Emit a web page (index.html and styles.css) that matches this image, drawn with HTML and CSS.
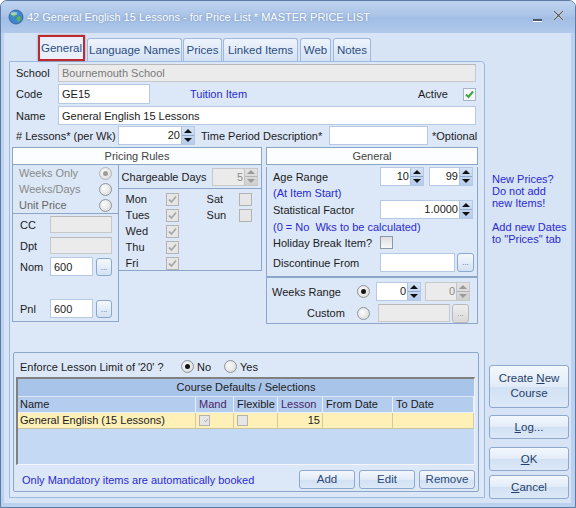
FILE: index.html
```html
<!DOCTYPE html>
<html lang="en">
<head>
    <meta charset="UTF-8">
    <title>42 General English 15 Lessons - for Price List * MASTER PRICE LIST</title>
    <link rel="stylesheet" href="styles.css">
</head>
<body>
<div class="window">
    <div class="titlebar">
        <svg class="app-icon" width="16" height="16" viewBox="0 0 16 16">
            <circle cx="8" cy="8" r="7" fill="#3f86cc" stroke="#2a5f98" stroke-width="0.8"/>
            <path d="M3 5 Q5 3 7 4 L8 6 L6 8 L4 7 Z" fill="#5fb84a"/>
            <path d="M9 8 L12 7 L13 10 L10 13 L9 11 Z" fill="#5fb84a"/>
            <ellipse cx="6" cy="4.5" rx="3.5" ry="1.8" fill="#ffffff" opacity="0.45"/>
        </svg>
        <span class="title">42 General English 15 Lessons - for Price List * MASTER PRICE LIST</span>
        <span class="win-min"></span>
        <svg class="win-close" width="11" height="11" viewBox="0 0 11 11">
            <path d="M1 1 L10 10 M10 1 L1 10" stroke="#ffffff" stroke-width="2.4"/>
            <path d="M1 1 L10 10 M10 1 L1 10" stroke="#555d68" stroke-width="1.3"/>
        </svg>
    </div>

    <div class="client">
        <div class="main">
            <div class="tabs">
                <div class="tab selected">General</div>
                <div class="tab t-lang">Language Names</div>
                <div class="tab t-prices">Prices</div>
                <div class="tab t-linked">Linked Items</div>
                <div class="tab t-web">Web</div>
                <div class="tab t-notes">Notes</div>
            </div>

            <div class="panel">
                <div class="frow r-school">
                    <span class="lbl">School</span>
                    <span class="txt dis w418">Bournemouth School</span>
                </div>
                <div class="frow r-code">
                    <span class="lbl">Code</span>
                    <span class="txt w92">GE15</span>
                    <span class="blue tuition">Tuition Item</span>
                    <span class="active-lbl">Active</span>
                    <span class="cb active-cb"><svg width="11" height="11" viewBox="0 0 11 11"><path d="M2 5.5 L4.5 8 L9 2.5" fill="none" stroke="#3aa83a" stroke-width="2"/></svg></span>
                </div>
                <div class="frow r-name">
                    <span class="lbl">Name</span>
                    <span class="txt w418">General English 15 Lessons</span>
                </div>
                <div class="frow r-lessons">
                    <span class="lbl lessons-lbl"># Lessons* (per Wk)</span>
                    <div class="spin w77"><span class="val">20</span><span class="arrows"><i class="up"></i><i class="dn"></i></span></div>
                    <span class="period-lbl">Time Period Description*</span>
                    <span class="txt w99"></span>
                    <span class="optional">*Optional</span>
                </div>

                <div class="groups">
                    <!-- Pricing rules -->
                    <div class="pricing">
                        <div class="ghead">Pricing Rules</div>
                        <div class="pr-body">
                            <div class="pr-left">
                                <div class="radios">
                                    <div class="ropt off"><span>Weeks Only</span><span class="rb dis on"></span></div>
                                    <div class="ropt off"><span>Weeks/Days</span><span class="rb"></span></div>
                                    <div class="ropt unit"><span>Unit Price</span><span class="rb"></span></div>
                                </div>
                                <div class="accts">
                                    <div class="arow a-cc"><span class="albl">CC</span><span class="txt dis w62"></span></div>
                                    <div class="arow a-dpt"><span class="albl">Dpt</span><span class="txt dis w62"></span></div>
                                    <div class="arow a-nom"><span class="albl">Nom</span><span class="txt w43">600</span><span class="dots">...</span></div>
                                    <div class="arow a-pnl"><span class="albl">Pnl</span><span class="txt w43">600</span><span class="dots">...</span></div>
                                </div>
                            </div>
                            <div class="pr-mid">
                                <div class="charge">
                                    <span>Chargeable Days</span>
                                    <div class="spin dis w46"><span class="val">5</span><span class="arrows"><i class="up"></i><i class="dn"></i></span></div>
                                </div>
                                <div class="days">
                                    <span>Mon</span><span class="cb dis on"><svg width="11" height="11" viewBox="0 0 11 11"><path d="M2 5.5 L4.5 8 L9 2.5" fill="none" stroke="#a9a9a9" stroke-width="1.8"/></svg></span><span></span><span>Sat</span><span class="cb dis"></span>
                                    <span>Tues</span><span class="cb dis on"><svg width="11" height="11" viewBox="0 0 11 11"><path d="M2 5.5 L4.5 8 L9 2.5" fill="none" stroke="#a9a9a9" stroke-width="1.8"/></svg></span><span></span><span>Sun</span><span class="cb dis"></span>
                                    <span>Wed</span><span class="cb dis on"><svg width="11" height="11" viewBox="0 0 11 11"><path d="M2 5.5 L4.5 8 L9 2.5" fill="none" stroke="#a9a9a9" stroke-width="1.8"/></svg></span><span></span><span></span><span></span>
                                    <span>Thu</span><span class="cb dis on"><svg width="11" height="11" viewBox="0 0 11 11"><path d="M2 5.5 L4.5 8 L9 2.5" fill="none" stroke="#a9a9a9" stroke-width="1.8"/></svg></span><span></span><span></span><span></span>
                                    <span>Fri</span><span class="cb dis on"><svg width="11" height="11" viewBox="0 0 11 11"><path d="M2 5.5 L4.5 8 L9 2.5" fill="none" stroke="#a9a9a9" stroke-width="1.8"/></svg></span><span></span><span></span><span></span>
                                </div>
                            </div>
                        </div>
                    </div>

                    <!-- General settings -->
                    <div class="general">
                        <div class="ghead">General</div>
                        <div class="gen-body">
                            <div class="grow g-age">
                                <span class="glbl">Age Range</span>
                                <div class="spin w44"><span class="val">10</span><span class="arrows"><i class="up"></i><i class="dn"></i></span></div>
                                <div class="spin w44 sp-gap"><span class="val">99</span><span class="arrows"><i class="up"></i><i class="dn"></i></span></div>
                            </div>
                            <div class="grow g-start blue">(At Item Start)</div>
                            <div class="grow g-stat">
                                <span class="glbl">Statistical Factor</span>
                                <div class="spin w93"><span class="val">1.0000</span><span class="arrows"><i class="up"></i><i class="dn"></i></span></div>
                            </div>
                            <div class="grow g-zero blue">(0 = No&nbsp; Wks to be calculated)</div>
                            <div class="grow g-hol">
                                <span class="glbl">Holiday Break Item?</span>
                                <span class="cb"></span>
                            </div>
                            <div class="grow g-disc">
                                <span class="glbl">Discontinue From</span>
                                <span class="txt w75"></span>
                                <span class="dots d17">...</span>
                            </div>
                        </div>
                        <div class="weeks">
                            <div class="grow w-range">
                                <span class="wlbl">Weeks Range</span>
                                <span class="rb on"></span>
                                <div class="spin w45 wk-sp1"><span class="val">0</span><span class="arrows"><i class="up"></i><i class="dn"></i></span></div>
                                <div class="spin dis w45 wk-sp2"><span class="val">0</span><span class="arrows"><i class="up"></i><i class="dn"></i></span></div>
                            </div>
                            <div class="grow w-custom">
                                <span class="wlbl custom-lbl">Custom</span>
                                <span class="rb"></span>
                                <span class="txt dis w72 custom-in"></span>
                                <span class="dots d17 dis">...</span>
                            </div>
                        </div>
                    </div>
                </div>

                <!-- Course defaults -->
                <div class="course">
                    <div class="enforce">
                        <span class="enf-lbl">Enforce Lesson Limit of '20' ?</span>
                        <span class="rb on"></span><span class="opt">No</span>
                        <span class="rb"></span><span class="opt">Yes</span>
                    </div>
                    <div class="grid">
                        <div class="grid-title">Course Defaults / Selections</div>
                        <div class="grid-row grid-head">
                            <span>Name</span><span class="purple">Mand</span><span>Flexible</span><span class="purple">Lesson</span><span>From Date</span><span>To Date</span>
                        </div>
                        <div class="grid-row grid-data">
                            <span>General English (15 Lessons)</span>
                            <span><span class="cb small dis on"><svg width="9" height="9" viewBox="0 0 11 11"><path d="M2 5.5 L4.5 8 L9 2.5" fill="none" stroke="#a9a9a9" stroke-width="1.8"/></svg></span></span>
                            <span><span class="cb small dis"></span></span>
                            <span class="num">15</span>
                            <span></span>
                            <span></span>
                        </div>
                    </div>
                    <div class="course-foot">
                        <span class="blue foot-note">Only Mandatory items are automatically booked</span>
                        <span class="btn small-btn">Add</span>
                        <span class="btn small-btn">Edit</span>
                        <span class="btn small-btn">Remove</span>
                    </div>
                </div>
            </div>
        </div>

        <div class="side">
            <div class="side-note blue">
                New Prices?<br>
                Do not add<br>
                new Items!<br>
                <br>
                Add new Dates<br>
                to "Prices" tab
            </div>
            <span class="btn side-btn create">Create <u>N</u>ew<br>Course</span>
            <span class="btn side-btn log"><u>L</u>og...</span>
            <span class="btn side-btn ok"><u>O</u>K</span>
            <span class="btn side-btn cancel"><u>C</u>ancel</span>
        </div>
    </div>
</div>
</body>
</html>
```

FILE: styles.css
```css
/* Window frame */
body {
    margin: 0;
    font-family: "Liberation Sans", Arial, sans-serif;
    font-size: 11px;
    color: #1b1b1b;
    background: #ffffff;
}

.window {
    width: 576px;
    height: 508px;
    box-sizing: border-box;
    border: 1px solid #5b7ba6;
    border-radius: 7px 7px 0 0;
    background: #bcd1ee;
    display: flex;
    flex-direction: column;
    overflow: hidden;
}

.titlebar {
    height: 32px;
    flex: none;
    display: flex;
    align-items: center;
    padding-left: 7px;
    background: linear-gradient(#bfd3ef, #a8c2e7 50%, #a1bde5 52%, #b1c9ea);
    color: #ffffff;
    font-size: 11px;
}

.app-icon {
    margin-right: 3px;
}

.title {
    text-shadow: 0 0 2px rgba(60, 90, 130, 0.5);
}

.win-min {
    margin-left: auto;
    width: 9px;
    height: 2px;
    margin-top: 6px;
    background: #4d5663;
    box-shadow: 0 1px 0 #ffffff;
}

.win-close {
    margin-left: 11px;
    margin-right: 11px;
    margin-top: -3px;
}

.client {
    flex: 1;
    margin: 0 4px 4px 3px;
    padding: 1px 0 0 5px;
    background: #d7e4f6;
    display: flex;
}

.main {
    width: 476px;
}

.side {
    width: 86px;
    display: flex;
    flex-direction: column;
}

/* Tabs */
.tabs {
    height: 27px;
    display: flex;
    align-items: flex-end;
    padding-left: 29px;
}

.tab {
    height: 23px;
    box-sizing: border-box;
    border: 1px solid #9fb9dd;
    border-bottom: none;
    border-radius: 3px 3px 0 0;
    background: linear-gradient(#eef4fc, #d4e2f5);
    color: #2d4e80;
    text-align: center;
    line-height: 22px;
    font-size: 11.5px;
    margin-left: 1px;
}

.tab.selected {
    width: 47px;
    height: 26px;
    margin-left: 0;
    border: 2px solid #c1282d;
    border-radius: 0;
    background: #e9f0fb;
    line-height: 23px;
    box-shadow: 0 0 2px rgba(0, 0, 0, 0.35);
}

.t-lang { width: 95px; margin-left: 2px; }
.t-prices { width: 39px; }
.t-linked { width: 75px; }
.t-web { width: 31px; margin-left: 2px; }
.t-notes { width: 38px; margin-left: 2px; }

/* Tab panel */
.panel {
    height: 437px;
    box-sizing: border-box;
    border: 1px solid #9cb9e0;
    border-radius: 0 4px 0 0;
    background: #dce8f8;
    padding: 2px 5px 0 2px;
}

.frow {
    display: flex;
    align-items: center;
}

.r-school { height: 18px; }
.r-code { height: 20px; margin-top: 2px; }
.r-name { height: 19px; margin-top: 2px; }
.r-lessons { height: 19px; margin-top: 1px; }

.lbl {
    width: 46px;
    box-sizing: border-box;
    padding-left: 4px;
}

.lessons-lbl { width: 106px; }

.blue {
    color: #2a2ad2;
}

.tuition { margin-left: 40px; }
.active-lbl { margin-left: auto; }
.active-cb { margin-left: 15px; margin-right: 3px; }

.period-lbl {
    width: 134px;
    box-sizing: border-box;
    padding-left: 6px;
}

.optional { margin-left: 4px; }

/* Inputs */
.txt {
    height: 100%;
    box-sizing: border-box;
    border: 1px solid #b5c9e4;
    background: #ffffff;
    padding-left: 3px;
    display: flex;
    align-items: center;
    white-space: nowrap;
}

.txt.dis {
    background: #ebebeb;
    border-color: #c8c8c8;
    border-top-color: #b8b8b8;
    color: #7a7a7a;
}

.w418 { width: 418px; }
.w99 { width: 99px; }
.w92 { width: 92px; }
.w93 { width: 93px; }
.w77 { width: 77px; }
.w75 { width: 75px; }
.w72 { width: 72px; }
.w62 { width: 62px; }
.w46 { width: 46px; }
.w45 { width: 45px; }
.w44 { width: 44px; }
.w43 { width: 43px; }

.spin {
    height: 19px;
    box-sizing: border-box;
    border: 1px solid #b5c9e4;
    background: #ffffff;
    display: flex;
}

.spin .val {
    flex: 1;
    text-align: right;
    line-height: 17px;
    padding-right: 1px;
}

.arrows {
    width: 12px;
    display: flex;
    flex-direction: column;
    background: linear-gradient(#d3e2f5, #b6ccec);
    border-left: 1px solid #a9c1e1;
}

.arrows i {
    flex: 1;
    display: flex;
    align-items: center;
    justify-content: center;
}

.arrows .up {
    border-bottom: 1px solid #8fa8c8;
}

.arrows .up::before {
    content: "";
    border-left: 4px solid transparent;
    border-right: 4px solid transparent;
    border-bottom: 4px solid #111111;
}

.arrows .dn::before {
    content: "";
    border-left: 4px solid transparent;
    border-right: 4px solid transparent;
    border-top: 4px solid #111111;
}

.spin.dis {
    background: #ebebeb;
    border-color: #c8c8c8;
    color: #8a8a8a;
}

.spin.dis .arrows {
    background: linear-gradient(#e4e4e4, #cfcfcf);
    border-left-color: #c4c4c4;
}

.spin.dis .arrows .up { border-bottom-color: #b5b5b5; }
.spin.dis .arrows .up::before { border-bottom-color: #9a9a9a; }
.spin.dis .arrows .dn::before { border-top-color: #9a9a9a; }

.dots {
    width: 16px;
    height: 18px;
    box-sizing: border-box;
    border: 1px solid #8da8cc;
    border-radius: 3px;
    background: linear-gradient(#f4f8fd, #d3e2f4);
    color: #4669a0;
    font-size: 8px;
    text-align: center;
    line-height: 18px;
    margin-left: 3px;
}

.dots.d17 {
    width: 17px;
    height: 19px;
    margin-left: 2px;
}

.dots.dis {
    border-color: #b9b9b9;
    background: linear-gradient(#eeeeee, #d9d9d9);
    color: #8a8a8a;
}

/* Checkboxes and radios */
.cb {
    width: 13px;
    height: 13px;
    box-sizing: border-box;
    border: 1px solid #8e99a8;
    background: linear-gradient(#dedede, #f8f8f8);
    display: inline-flex;
    align-items: center;
    justify-content: center;
}

.cb.dis {
    border-color: #b3b3b3;
    background: #e6e6e6;
}

.cb.small {
    width: 11px;
    height: 11px;
}

.active-cb {
    border-color: #a5b6cb;
    background: #f4f7fb;
}

.rb {
    width: 13px;
    height: 13px;
    box-sizing: border-box;
    border-radius: 50%;
    border: 1px solid #8f949b;
    background: radial-gradient(circle at 40% 40%, #fdfdfd, #d3d3d3);
    display: inline-flex;
    align-items: center;
    justify-content: center;
    flex: none;
}

.rb.on::after {
    content: "";
    width: 5px;
    height: 5px;
    border-radius: 50%;
    background: #141414;
}

.rb.dis {
    border-color: #b4b4b4;
}

.rb.dis.on::after {
    background: #9c9c9c;
}

/* Group boxes */
.groups {
    height: 175px;
    margin-top: 2px;
    display: flex;
}

.ghead {
    height: 18px;
    box-sizing: border-box;
    border: 1px solid #8ba6c9;
    background: #fbfdff;
    color: #444444;
    text-align: center;
    line-height: 16px;
}

.pricing {
    width: 250px;
}

.pr-body {
    display: flex;
}

.pr-left {
    width: 107px;
}

.radios {
    height: 48px;
    border-left: 1px solid #8ba6c9;
}

.ropt {
    height: 16px;
    display: flex;
    align-items: center;
    justify-content: space-between;
    padding: 0 7px 0 6px;
}

.ropt.off { color: #8a8a8a; }
.ropt.unit { color: #666666; }

.accts {
    height: 109px;
    box-sizing: border-box;
    border: 1px solid #8ba6c9;
}

.arow {
    display: flex;
    align-items: center;
    padding-left: 7px;
}

.albl { width: 30px; }

.a-cc { height: 17px; margin-top: 2px; }
.a-dpt { height: 17px; margin-top: 4px; }
.a-nom { height: 19px; margin-top: 3px; }
.a-pnl { height: 19px; margin-top: 23px; }

.pr-mid {
    width: 145px;
    height: 106px;
    margin-left: -1px;
    box-sizing: border-box;
    border: 1px solid #8ba6c9;
    border-top: none;
}

.charge {
    height: 23px;
    display: flex;
    align-items: center;
    padding: 0 3px 0 3px;
    justify-content: space-between;
}

.charge .spin {
    height: 18px;
}

.days {
    border-top: 1px solid #8ba6c9;
    display: grid;
    grid-template-columns: 40px 13px 28px 32px 13px;
    grid-auto-rows: 16px;
    align-items: center;
    padding: 2px 0 0 7px;
}

.general {
    width: 212px;
    margin-left: 4px;
}

.gen-body {
    height: 110px;
    box-sizing: border-box;
    border: 1px solid #8ba6c9;
    border-top: none;
    padding-left: 6px;
}

.grow {
    display: flex;
    align-items: center;
}

.glbl { width: 107px; }

.g-age { height: 19px; margin-top: 2px; }
.sp-gap { margin-left: 5px; }
.g-start { height: 13px; }
.g-stat { height: 19px; margin-top: 1px; }
.g-zero { height: 15px; }
.g-hol { height: 17px; }
.g-disc { height: 19px; margin-top: 2px; }

.weeks {
    height: 47px;
    box-sizing: border-box;
    border: 1px solid #8ba6c9;
}

.wlbl {
    width: 90px;
    box-sizing: border-box;
    padding-left: 5px;
}

.custom-lbl { padding-left: 40px; }

.w-range { height: 19px; margin-top: 4px; }
.w-custom { height: 18px; margin-top: 3px; }
.wk-sp1 { margin-left: 6px; }
.wk-sp2 { margin-left: 4px; }
.custom-in { margin-left: 8px; }

/* Course defaults */
.course {
    height: 140px;
    width: 466px;
    box-sizing: border-box;
    margin: 30px 0 0 1px;
    border: 1px solid #8ba6c9;
    border-radius: 2px;
}

.enforce {
    height: 17px;
    margin-top: 5px;
    display: flex;
    align-items: center;
    padding-left: 6px;
}

.enf-lbl { width: 161px; }

.opt {
    width: 30px;
    box-sizing: border-box;
    padding-left: 3px;
}

.grid {
    height: 88px;
    box-sizing: border-box;
    margin: 2px 3px 0 2px;
    border-top: 2px solid #808080;
    border-left: 2px solid #808080;
    border-right: 1px solid #eef3fa;
    border-bottom: 1px solid #f3f7fc;
    background: #c4d9f4;
}

.grid-title {
    height: 17px;
    background: #a9c4e9;
    text-align: center;
    line-height: 17px;
    border-bottom: 1px solid #dce7f6;
}

.grid-row {
    display: grid;
    grid-template-columns: 178px 38px 44px 45px 70px 1fr;
    height: 16px;
}

.grid-row span {
    box-sizing: border-box;
    line-height: 15px;
    padding-left: 3px;
    white-space: nowrap;
    overflow: hidden;
}

.grid-head {
    background: #b4cced;
}

.grid-head span {
    border-right: 1px solid #e8f0fb;
    border-bottom: 1px solid #e8f0fb;
}

.grid-head span:first-child { padding-left: 2px; }

.purple { color: #4a2466; }

.grid-data {
    background: #fff0b8;
}

.grid-data > span {
    border-right: 1px solid #d3c9a2;
    border-bottom: 1px solid #cbc39f;
    display: flex;
    align-items: center;
}

.grid-data > span:first-child { padding-left: 2px; }

.grid-data .num {
    justify-content: flex-end;
    padding-right: 2px;
}

.course-foot {
    height: 19px;
    margin-top: 5px;
    display: flex;
    align-items: center;
}

.foot-note {
    padding-left: 8px;
    margin-right: auto;
}

/* Buttons */
.btn {
    box-sizing: border-box;
    border: 1px solid #8ea8cb;
    border-radius: 3px;
    background: linear-gradient(#f4f8fd, #e1ebf8 50%, #d2e1f4 51%, #dce8f7);
    color: #2c4a78;
    text-align: center;
    font-size: 11.5px;
}

.small-btn {
    width: 56px;
    height: 19px;
    line-height: 17px;
    margin-left: 4px;
}

.small-btn:last-child { margin-right: 3px; }

.side-note {
    margin-top: 139px;
    padding-left: 7px;
    line-height: 12px;
}

.side-btn {
    display: block;
    width: 80px;
    margin-left: 4px;
    height: 24px;
    line-height: 22px;
    color: #233f6b;
}

.create {
    height: 43px;
    margin-top: 120px;
    line-height: 15px;
    padding-top: 5px;
}

.log { margin-top: 7px; }
.ok { margin-top: 8px; }
.cancel { margin-top: 4px; }
```
